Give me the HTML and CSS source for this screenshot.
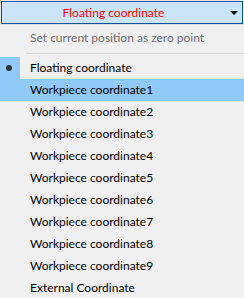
FILE: index.html
```html
<!DOCTYPE html>
<html lang="en">

<head>
    <meta charset="UTF-8" />
    <meta name="viewport" content="width=device-width, initial-scale=1.0" />
    <title>Coordinate menu</title>
    <link rel="stylesheet" href="styles.css">
</head>

<body>
    <div class="combo">
        <span class="combo-text">Floating coordinate</span>
        <span class="combo-btn"><span class="arrow"></span></span>
    </div>

    <ul class="menu">
        <li class="item disabled"><span class="mark"></span><span class="label">Set current position as zero point</span></li>
        <li class="sep"></li>
        <li class="item checked"><span class="mark"><span class="dot"></span></span><span class="label">Floating coordinate</span></li>
        <li class="item hover"><span class="mark"></span><span class="label">Workpiece coordinate1</span></li>
        <li class="item"><span class="mark"></span><span class="label">Workpiece coordinate2</span></li>
        <li class="item"><span class="mark"></span><span class="label">Workpiece coordinate3</span></li>
        <li class="item"><span class="mark"></span><span class="label">Workpiece coordinate4</span></li>
        <li class="item"><span class="mark"></span><span class="label">Workpiece coordinate5</span></li>
        <li class="item"><span class="mark"></span><span class="label">Workpiece coordinate6</span></li>
        <li class="item"><span class="mark"></span><span class="label">Workpiece coordinate7</span></li>
        <li class="item"><span class="mark"></span><span class="label">Workpiece coordinate8</span></li>
        <li class="item"><span class="mark"></span><span class="label">Workpiece coordinate9</span></li>
        <li class="item"><span class="mark"></span><span class="label">External Coordinate</span></li>
    </ul>
</body>

</html>
```

FILE: styles.css
```css
body {
    margin: 0;
    background-color: #f0f0f0;
    font-family: Lato, "Liberation Sans", sans-serif;
    font-size: 12px;
    color: #000;
    overflow: hidden;
}

.combo {
    display: flex;
    align-items: center;
    box-sizing: border-box;
    height: 23px;
    margin: 1px 1px 0 1px;
    background-color: #cce4f7;
    border: 1px solid #005499;
}

.combo-text {
    flex: 1;
    text-align: center;
    color: #ff0000;
}

.combo-btn {
    width: 17px;
    display: flex;
    justify-content: center;
    align-items: center;
}

.arrow {
    width: 0;
    height: 0;
    border-left: 4px solid transparent;
    border-right: 4px solid transparent;
    border-top: 4px solid #000;
}

.menu {
    list-style: none;
    margin: 0;
    padding: 2px 0 0 0;
    border-top: 1px solid #dadada;
}

.item {
    display: flex;
    height: 22px;
    line-height: 22px;
    white-space: nowrap;
}

.mark {
    width: 20px;
    display: flex;
    justify-content: center;
    align-items: center;
}

.label {
    margin-left: 10px;
}

.disabled {
    color: #6d6d6d;
}

.checked .mark {
    background-color: #91c9f7;
}

.dot {
    width: 6px;
    height: 6px;
    border-radius: 50%;
    background-color: #333;
    margin-left: -2px;
}

.hover {
    background-color: #91c9f7;
}

.sep {
    height: 1px;
    margin: 4px 0 3px 26px;
    background-color: #d7d7d7;
}
```
